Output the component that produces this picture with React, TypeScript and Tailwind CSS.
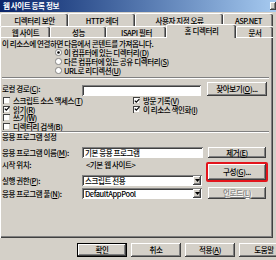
import type { ReactNode } from 'react';

const RAISED =
  'bg-[#d4d0c8] shadow-[inset_-1px_-1px_0_#404040,inset_1px_1px_0_#ffffff,inset_-2px_-2px_0_#808080]';
const SUNKEN =
  'bg-white shadow-[inset_1px_1px_0_#808080,inset_-1px_-1px_0_#ffffff,inset_2px_2px_0_#404040]';

// underlined access key, e.g. (D)
const K = ({ children }: { children: ReactNode }) => (
  <span className="underline underline-offset-[1px]">{children}</span>
);

const Tab = ({ width, children }: { width: string; children: ReactNode }) => (
  <div
    className={`${width} flex items-center justify-center rounded-t-[2px] border-l border-t border-white pt-[1px] shadow-[inset_-1px_0_0_#404040,inset_-2px_0_0_#808080]`}
  >
    <span className="whitespace-nowrap">{children}</span>
  </div>
);

const Radio = ({ checked, children }: { checked?: boolean; children: ReactNode }) => (
  <div className="flex h-[9px] items-center gap-[2px] pl-[53px]">
    <svg width="7" height="7" viewBox="0 0 14 14">
      <circle cx="7" cy="7" r="6.2" fill="#ffffff" stroke="#6e6e6e" strokeWidth="1.6" />
      {checked ? <circle cx="7" cy="7" r="2.6" fill="#000000" /> : null}
    </svg>
    <span className="whitespace-nowrap">{children}</span>
  </div>
);

const Check = ({ checked, children }: { checked?: boolean; children: ReactNode }) => (
  <div className="flex h-[8.5px] items-center gap-[3px]">
    <span className="flex h-[7px] w-[7px] items-center justify-center bg-white shadow-[inset_1px_1px_0_#404040,inset_-1px_-1px_0_#d4d0c8]">
      {checked ? (
        <svg width="6" height="6" viewBox="0 0 6 6">
          <path d="M0.8 2.6 L2.3 4.2 L5.3 1.2" fill="none" stroke="#000000" strokeWidth="1.2" />
        </svg>
      ) : null}
    </span>
    <span className="whitespace-nowrap">{children}</span>
  </div>
);

const Select = ({ value }: { value: string }) => (
  <div className={`flex h-[11px] w-[120px] items-center pl-[3px] ${SUNKEN}`}>
    <span className="whitespace-nowrap">{value}</span>
    <div className={`ml-auto mr-[1px] flex h-[9px] w-[8px] items-center justify-center ${RAISED}`}>
      <svg width="5" height="3" viewBox="0 0 5 3">
        <path d="M0 0 H5 L2.5 3 Z" fill="#000000" />
      </svg>
    </div>
  </div>
);

const Etched = () => (
  <div className="mr-[4px] h-[2px] border-t border-b border-t-[#808080] border-b-white" />
);

export default function App() {
  return (
    <div className="h-[260px] w-[276px] overflow-hidden bg-[#d4d0c8] font-['Noto_Sans_CJK_KR','Noto_Sans',sans-serif] text-[7.5px] font-medium leading-none tracking-[-0.4px] text-black">
      {/* title bar */}
      <div className="flex h-[12px] items-center bg-linear-to-r from-[#0a246a] to-[#a6caf0] pl-[3px]">
        <span className="font-bold text-white">웹 사이트 등록 정보</span>
        <div className={`ml-auto h-[8px] w-[6px] ${RAISED}`} />
      </div>

      {/* tabs */}
      <div className="mt-[1px] flex h-[13px]">
        <Tab width="w-[68px]">디렉터리 보안</Tab>
        <Tab width="w-[67px]">HTTP 헤더</Tab>
        <Tab width="w-[88px]">사용자 지정 오류</Tab>
        <Tab width="w-[50px]">ASP.NET</Tab>
      </div>
      <div className="flex h-[11px]">
        <Tab width="w-[50px]">웹 사이트</Tab>
        <Tab width="w-[56px]">성능</Tab>
        <Tab width="w-[60px]">ISAPI 필터</Tab>
        <div className="relative z-10 -mb-[1px] -mt-[2px] flex h-[14px] w-[70px] items-center justify-center rounded-t-[2px] border-l border-t border-white bg-[#d4d0c8] pb-[1px] shadow-[inset_-1px_0_0_#404040,inset_-2px_0_0_#808080]">
          <span className="whitespace-nowrap">홈 디렉터리</span>
        </div>
        <Tab width="w-[37px]">문서</Tab>
      </div>

      {/* panel */}
      <div className="flex h-[201px] w-[273px] flex-col border-l border-t border-white pl-[1px] pt-[1px] shadow-[inset_-1px_-1px_0_#404040,inset_-2px_-2px_0_#808080]">
        <div className="flex h-[9px] items-center whitespace-nowrap">
          이 리소스에 연결하면 다음에서 콘텐트를 가져옵니다.
        </div>
        <Radio checked>
          이 컴퓨터에 있는 디렉터리(<K>D</K>)
        </Radio>
        <Radio>
          다른 컴퓨터에 있는 공유 디렉터리(<K>S</K>)
        </Radio>
        <Radio>
          URL로 리디렉션(<K>U</K>)
        </Radio>

        <div className="mt-[2px]">
          <Etched />
        </div>

        <div className="mt-[3px] flex h-[14px]">
          <span className="w-[80px] self-center whitespace-nowrap">
            로컬 경로(<K>C</K>):
          </span>
          <div className={`h-[11px] w-[119px] self-end ${SUNKEN}`} />
          <div className={`ml-[6px] flex h-[14px] w-[60px] items-center justify-center ${RAISED}`}>
            찾아보기(<K>O</K>)...
          </div>
        </div>

        <div className="mt-[0.5px] flex">
          <div className="flex w-[131px] flex-col pl-[1px]">
            <Check>
              스크립트 소스 액세스(<K>T</K>)
            </Check>
            <Check checked>
              읽기(<K>R</K>)
            </Check>
            <Check>
              쓰기(<K>W</K>)
            </Check>
            <Check>
              디렉터리 검색(<K>B</K>)
            </Check>
          </div>
          <div className="flex flex-col">
            <Check checked>
              방문 기록(<K>V</K>)
            </Check>
            <Check checked>
              이 리소스 색인화(<K>I</K>)
            </Check>
          </div>
        </div>

        <Etched />

        <div className="flex h-[9px] items-center">응용 프로그램 설정</div>

        <div className="mt-[5.5px] flex">
          <div className="flex w-[204px] flex-col">
            <div className="flex h-[11px] items-center">
              <span className="w-[80px] whitespace-nowrap">
                응용 프로그램 이름(<K>M</K>):
              </span>
              <div className={`flex h-[11px] w-[121px] items-center pl-[3px] ${SUNKEN}`}>
                기본 응용 프로그램
              </div>
            </div>
            <div className="mt-[2px] flex h-[10px] items-center">
              <span className="w-[80px]">시작 위치:</span>
              <span className="pl-[4px]">&lt;기본 웹 사이트&gt;</span>
            </div>
            <div className="mt-[5px] flex h-[11px] items-center">
              <span className="w-[80px] whitespace-nowrap">
                실행 권한(<K>P</K>):
              </span>
              <Select value="스크립트 전용" />
            </div>
            <div className="mt-[2px] flex h-[11px] items-center">
              <span className="w-[80px] whitespace-nowrap">
                응용 프로그램 풀(<K>N</K>):
              </span>
              <Select value="DefaultAppPool" />
            </div>
          </div>

          <div className="flex w-[62px] flex-col">
            <div className={`ml-[2px] flex h-[11px] w-[58px] items-center justify-center ${RAISED}`}>
              제거(<K>E</K>)
            </div>
            <div className="mt-[4px] h-[20px] w-[62px] rounded-[2px] border-2 border-[#e3141b]">
              <div className={`flex h-full w-full items-center justify-center ${RAISED}`}>
                구성(<K>G</K>)...
              </div>
            </div>
            <div
              className={`ml-[2px] mt-[5px] flex h-[12px] w-[58px] items-center justify-center text-[#808080] [text-shadow:1px_1px_0_#ffffff] ${RAISED}`}
            >
              언로드(<K>L</K>)
            </div>
          </div>
        </div>
      </div>

      {/* dialog buttons */}
      <div className="mt-[5px] flex gap-[4px] pl-[77px]">
        <div className={`flex h-[14px] w-[50px] shrink-0 items-center justify-center border border-black ${RAISED}`}>
          확인
        </div>
        <div className={`flex h-[14px] w-[50px] shrink-0 items-center justify-center ${RAISED}`}>
          취소
        </div>
        <div className={`flex h-[14px] w-[50px] shrink-0 items-center justify-center ${RAISED}`}>
          적용(<K>A</K>)
        </div>
        <div className={`flex h-[14px] w-[50px] shrink-0 items-center justify-center ${RAISED}`}>
          도움말
        </div>
      </div>
    </div>
  );
}
